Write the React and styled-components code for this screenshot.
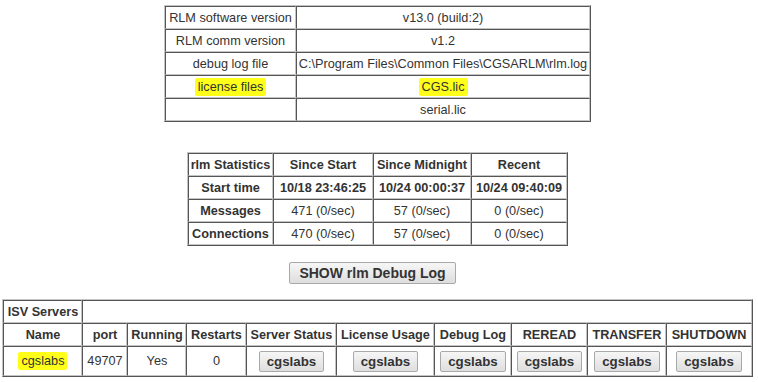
import React from 'react'
import styled, { createGlobalStyle } from 'styled-components'

const GlobalStyle = createGlobalStyle`
body {
  margin: 0;
  background: #fff;
  font-family: "Liberation Sans", Arial, sans-serif;
  color: #333;
}
`

const Page = styled.div`
width: 755px;
display: flex;
flex-direction: column;
align-items: center;
padding-top: 5px;
`

const Table = styled.table`
border-spacing: 0;
table-layout: fixed;
border: 1px solid;
border-color: #c4c4c4 #555 #555 #c4c4c4;
width: ${p => p.width}px;
margin-top: ${p => p.gap || 0}px;
font-size: 12.7px;
`

const Cell = styled.td`
border: 1px solid;
border-color: #555 #c4c4c4 #c4c4c4 #555;
height: ${p => p.h || 21}px;
padding: 0 1px;
text-align: center;
font-weight: ${p => (p.bold ? 'bold' : 'normal')};
white-space: nowrap;
line-height: 14px;
`

const Mark = styled.span`
background: #ffff1a;
padding: 2px 3px;
border-radius: 2px;
`

const Button = styled.button`
font-family: "Liberation Sans", Arial, sans-serif;
font-weight: bold;
font-size: ${p => p.size || 13.33}px;
color: #333;
background: linear-gradient(#f6f6f6, #dedede);
border: 1px solid #a9a9a9;
border-radius: 2px;
padding: ${p => p.pad || '2px 7px'};
cursor: pointer;
`

const ShowButton = styled(Button)`
margin-top: 16px;
margin-right: 10px;
`

const info = [
  ['RLM software version', 'v13.0 (build:2)'],
  ['RLM comm version', 'v1.2'],
  ['debug log file', 'C:\\Program Files\\Common Files\\CGSARLM\\rlm.log'],
  ['license files', 'CGS.lic', true],
  ['', 'serial.lic'],
]

const stats = [
  ['Start time', '10/18 23:46:25', '10/24 00:00:37', '10/24 09:40:09', true],
  ['Messages', '471 (0/sec)', '57 (0/sec)', '0 (0/sec)'],
  ['Connections', '470 (0/sec)', '57 (0/sec)', '0 (0/sec)'],
]

const isvCols = [
  ['Name', 79], ['port', 45], ['Running', 59], ['Restarts', 60],
  ['Server Status', 90], ['License Usage', 98], ['Debug Log', 77],
  ['REREAD', 76], ['TRANSFER', 79], ['SHUTDOWN', 85],
]

export default function App() {
  return (
    <Page>
      <GlobalStyle />
      <Table width={425}>
        <colgroup>
          <col style={{ width: 131 }} />
          <col style={{ width: 294 }} />
        </colgroup>
        <tbody>
          {info.map(([k, v, mark], i) => (
            <tr key={i}>
              <Cell>{mark ? <Mark>{k}</Mark> : k}</Cell>
              <Cell>{mark ? <Mark>{v}</Mark> : v}</Cell>
            </tr>
          ))}
        </tbody>
      </Table>

      <Table width={379} gap={30}>
        <colgroup>
          <col style={{ width: 85 }} />
          <col style={{ width: 100 }} />
          <col style={{ width: 98 }} />
          <col style={{ width: 96 }} />
        </colgroup>
        <tbody>
          <tr>
            <Cell bold>rlm Statistics</Cell>
            <Cell bold>Since Start</Cell>
            <Cell bold>Since Midnight</Cell>
            <Cell bold>Recent</Cell>
          </tr>
          {stats.map(([k, a, b, c, bold]) => (
            <tr key={k}>
              <Cell bold>{k}</Cell>
              <Cell bold={bold}>{a}</Cell>
              <Cell bold={bold}>{b}</Cell>
              <Cell bold={bold}>{c}</Cell>
            </tr>
          ))}
        </tbody>
      </Table>

      <ShowButton size={14} pad="2px 9px">SHOW rlm Debug Log</ShowButton>

      <Table width={748} gap={15}>
        <colgroup>
          {isvCols.map(([n, w]) => (
            <col key={n} style={{ width: w }} />
          ))}
        </colgroup>
        <tbody>
          <tr>
            <Cell bold>ISV Servers</Cell>
            <Cell colSpan={9} />
          </tr>
          <tr>
            {isvCols.map(([n]) => (
              <Cell key={n} bold>{n}</Cell>
            ))}
          </tr>
          <tr>
            <Cell h={28}><Mark>cgslabs</Mark></Cell>
            <Cell>49707</Cell>
            <Cell>Yes</Cell>
            <Cell>0</Cell>
            {isvCols.slice(4).map(([n]) => (
              <Cell key={n}>
                <Button>cgslabs</Button>
              </Cell>
            ))}
          </tr>
        </tbody>
      </Table>
    </Page>
  )
}
